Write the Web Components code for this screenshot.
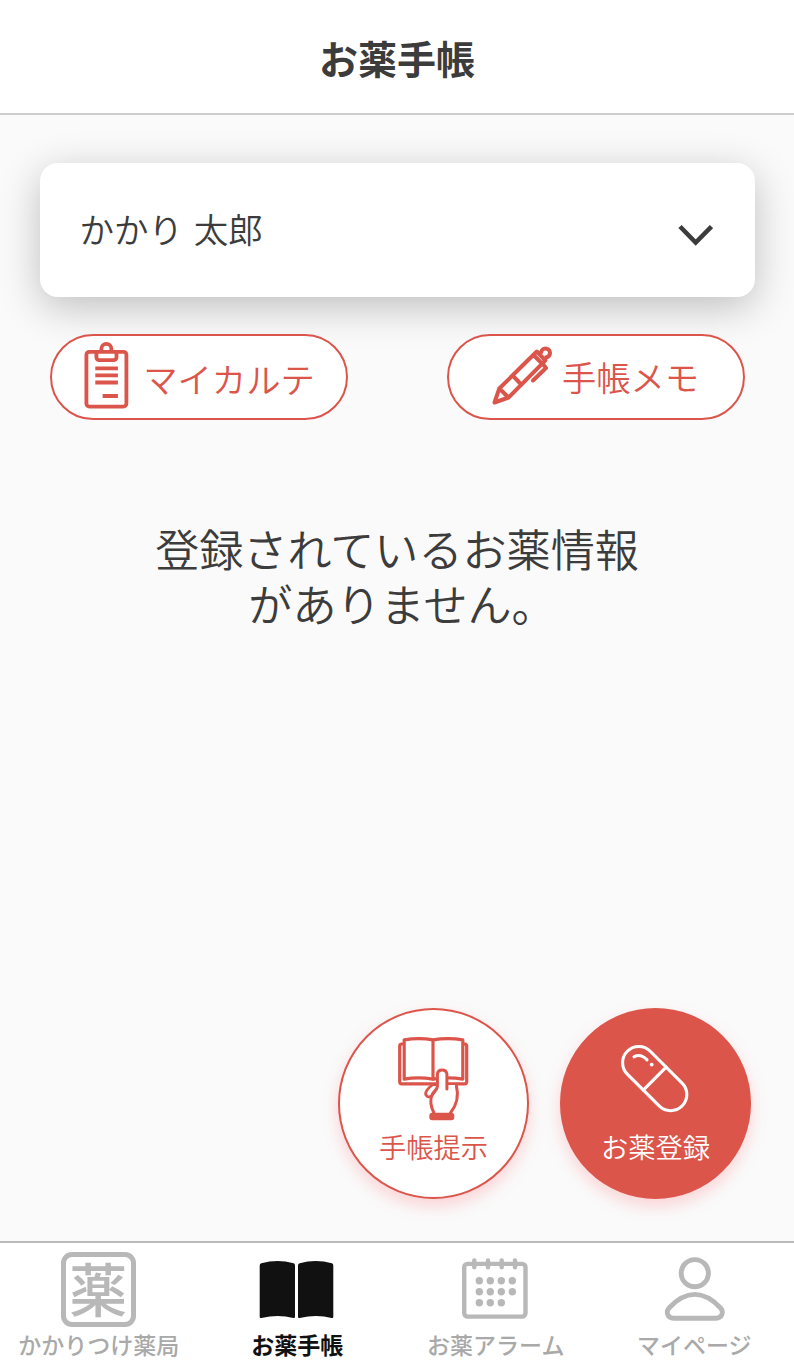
<!DOCTYPE html>
<html lang="ja">
<head>
<meta charset="utf-8">
<title>お薬手帳</title>
<style>
html,body{margin:0;height:100%}
body{font-family:"Noto Sans CJK JP",sans-serif;color:#3c3c3c;background:#fafafa}
</style>
</head>
<body>
<medicine-app></medicine-app>
<script>
const define = (name, html) => {
  const t = document.createElement('template');
  t.innerHTML = html;
  customElements.define(name, class extends HTMLElement {
    constructor() {
      super();
      this.attachShadow({mode: 'open'}).append(t.content.cloneNode(true));
    }
  });
};

define('app-header', `<style>
:host{display:flex;box-sizing:border-box;height:115px;flex:none;align-items:center;justify-content:center;background:#fff;border-bottom:2px solid #cdcfce}
h1{margin:0;font-size:39px;line-height:56px;font-weight:700}
</style><h1><slot></slot></h1>`);

define('user-select', `<style>
:host{display:flex;box-sizing:border-box;height:134px;padding:0 42px 0 39.5px;align-items:center;justify-content:space-between;background:#fff;border-radius:18px;box-shadow:0 10px 40px rgba(0,0,0,.24)}
span{font-size:34.5px;line-height:50px;font-weight:350;word-spacing:3px;padding-bottom:4px}
svg{display:block;margin-top:10px}
</style><span><slot></slot></span>
<svg width="35" height="22" viewBox="678 224 35 22" fill="none" stroke="#3c3c3c" stroke-width="4.6"><path d="M680 226.5 695.7 242.5 711.5 226.5"/></svg>`);

define('pill-button', `<style>
:host{display:flex;box-sizing:border-box;width:298px;height:86px;border:2px solid #dc554b;border-radius:43px;background:#fff;color:#dc554b;align-items:center;justify-content:center;font-size:34.3px;line-height:50px;font-weight:350}
::slotted(svg){display:block;flex:none}
</style><slot name="icon"></slot><slot></slot>`);

define('fab-button', `<style>
:host{display:flex;box-sizing:border-box;width:191px;height:191px;border:2px solid #dc554b;border-radius:50%;background:var(--fill,#fff);color:var(--ink,#dc554b);flex-direction:column;align-items:center;font-size:27.3px;line-height:40px;font-weight:350;box-shadow:0 7px 16px rgba(255,110,120,.28)}
::slotted(svg){display:block;margin:24px 1px 4px 0}
</style><slot name="icon"></slot><span><slot></slot></span>`);

define('nav-item', `<style>
:host{display:flex;flex:1;flex-direction:column;align-items:center;color:var(--ink,#a9a9a9);font-size:23px;line-height:34px;font-weight:var(--weight,500);white-space:nowrap}
.icon{display:flex;height:75px;margin:9px 2px 0 0;align-items:center}
::slotted(svg){display:block}
span{margin-right:1px}
</style><div class="icon"><slot name="icon"></slot></div><span><slot></slot></span>`);

define('pharmacy-mark', `<style>
:host{display:flex;box-sizing:border-box;width:75px;height:75px;border:5px solid #b8b8b8;border-radius:11px;color:#b8b8b8;align-items:center;justify-content:center;font-size:58px;line-height:61px;font-weight:500}
span{padding-bottom:5px}
</style><span><slot></slot></span>`);

define('tab-bar', `<style>
:host{display:flex;box-sizing:border-box;flex:none;height:122px;background:#fff;border-top:2px solid #b9bbba}
</style><slot></slot>`);

define('medicine-app', `<style>
:host{display:flex;flex-direction:column;height:1363px;overflow:hidden}
main{display:flex;flex-direction:column;flex:1;padding:48px 39px 42px 40px}
.actions{display:flex;justify-content:space-between;margin:37px 10px 0}
.empty{margin:101px 0 0;text-align:center;font-size:44.1px;line-height:55px;font-weight:350}
.first{padding-right:1px}
.second{padding-left:9px}
.fabs{display:flex;justify-content:flex-end;gap:31px;margin-top:auto;padding-right:4px}
.solid{--fill:#dc554b;--ink:#fff}
.active{--ink:#111;--weight:700}
</style>
<app-header>お薬手帳</app-header>
<main>
<user-select>かかり 太郎</user-select>
<div class="actions">
<pill-button><svg slot="icon" style="margin:-4px 14px 0 0" width="46" height="70" viewBox="83.4 340 46 70" fill="none" stroke="#dc554b" stroke-width="3.8"><rect x="86.8" y="351.8" width="40" height="54.8" rx="3"/><path d="M101.8 352v-3.2a5 5 0 0 1 10 0v3.2M96.8 352v5.2a3 3 0 0 0 3 3h14.1a3 3 0 0 0 3-3V352M95.7 368.3h22.6M95.7 375.4h22.6M95.7 382.5h22.6M103 396h15.3"/></svg><span style="padding-top:1px">マイカルテ</span></pill-button>
<pill-button><svg slot="icon" style="margin:-4px 9px 0 -2px" width="62" height="62" viewBox="491 345 62 62" fill="none" stroke="#dc554b" stroke-width="4" stroke-linejoin="round" stroke-linecap="round"><path d="M494.5 403.5 499.3 389.5 536.8 352.5 545.4 361.3 508.5 398.5ZM499.3 389.5 508.5 398.5M512.8 376.7 521.2 385.5M533.5 356 542 364.5M541 353.5a4.5 4.5 0 1 1 5.5 4.8M542.5 364.5 546 369 533 381.5"/></svg><span style="padding-bottom:2px">手帳メモ</span></pill-button>
</div>
<div class="empty"><div class="first">登録されているお薬情報</div><div class="second">がありません。</div></div>
<div class="fabs">
<fab-button><svg slot="icon" width="72" height="88" viewBox="397 1034 72 88" fill="none" stroke="#dc554b" stroke-width="3.2" stroke-linejoin="round" stroke-linecap="round"><path d="M403 1044h-1.3q-2 0-2 2v35.8q0 2 2 2h63q2 0 2-2V1046q0-2-2-2H463"/><path fill="#fff" d="M404.2 1039.8q14.8-2.5 28.8 0 15-2.5 29.8 0v39.3q-14.8-2.5-29.8 0-14.8-2.5-28.8 0Z"/><path d="M433 1040v39"/><path fill="#fff" stroke="none" d="M431 1096 437.5 1085V1074a4.7 4.7 0 0 1 9.4 0v11h9.5c3 11 .8 19.5-6.2 28h-17.4c-3.2-6-3.5-12-1.8-17Z"/><path fill="#fff" stroke-width="2.8" d="M436 1084.5h-2.5c-3 1-5 3.5-7 6.5-2.5 4 1.5 7.5 5 4.8 2-1.8 3-4.5 5-6.5"/><path stroke-width="3" d="M446.9 1089v-15a4.8 4.8 0 0 0-9.5 0v12.5c-.3 3-3 4.5-5 7.5-2.5 5.5-2 12 1.5 19M456.4 1086c2.5 9.5.8 18.5-6 27"/><rect x="429.3" y="1112.7" width="25" height="7.5" rx="3" fill="#dc554b" stroke="none"/></svg>手帳提示</fab-button>
<fab-button class="solid"><svg slot="icon" width="72" height="88" viewBox="619 1034 72 88" fill="none" stroke="#fff" stroke-width="3.1" stroke-linecap="round"><g transform="rotate(45 654.7 1078.6)"><rect x="616" y="1062.4" width="77.4" height="32.4" rx="16.2"/><path d="M654.7 1062.4v32.4"/></g><path d="M634 1056.8Q640.5 1053.2 647 1059.8"/><circle cx="651.7" cy="1064.6" r="1.9" fill="#fff" stroke="none"/></svg>お薬登録</fab-button>
</div>
</main>
<tab-bar>
<nav-item><pharmacy-mark slot="icon">薬</pharmacy-mark>かかりつけ薬局</nav-item>
<nav-item class="active"><svg slot="icon" width="76" height="76" viewBox="259 1252 76 76" fill="#111"><path d="M259.7 1265.5q0-1.7 1.7-2.2 16-4.5 32.2 0 1.4.5 1.4 2.2v51.2q0 1.7-1.7 1.2-15-3.8-31.9 0-1.7.5-1.7-1.2ZM298 1265.5q0-1.7 1.7-2.2 16-4.5 32.2 0 1.4.5 1.4 2.2v51.2q0 1.7-1.7 1.2-15-3.8-31.9 0-1.7.5-1.7-1.2Z"/></svg>お薬手帳</nav-item>
<nav-item><svg slot="icon" width="76" height="76" viewBox="457 1252 76 76" fill="none" stroke="#b8b8b8" stroke-width="4.4" stroke-linecap="round"><rect x="464.2" y="1263.9" width="61.3" height="52.7" rx="3.5"/><path d="M474.3 1260.5v6.7M488 1260.5v6.7M501.7 1260.5v6.7M515 1260.5v6.7"/><path stroke-width="7.4" d="M479.3 1280.7h.01M490.3 1280.7h.01M501.3 1280.7h.01M512.3 1280.7h.01M479.3 1291.7h.01M490.3 1291.7h.01M501.3 1291.7h.01M512.3 1291.7h.01M479.3 1302.7h.01M490.3 1302.7h.01M501.3 1302.7h.01"/></svg>お薬アラーム</nav-item>
<nav-item><svg slot="icon" width="76" height="76" viewBox="656.5 1252 76 76" fill="none" stroke="#b8b8b8" stroke-width="4.9"><circle cx="695.3" cy="1273.2" r="13.6"/><path d="M674 1318.2h42.5c6 0 8-6.2 4.6-10.2-7-7.5-16-13.6-25.8-13.6s-18.8 6.1-25.8 13.6c-3.4 4-1.5 10.2 4.5 10.2Z"/></svg>マイページ</nav-item>
</tab-bar>`);
</script>
</body>
</html>
